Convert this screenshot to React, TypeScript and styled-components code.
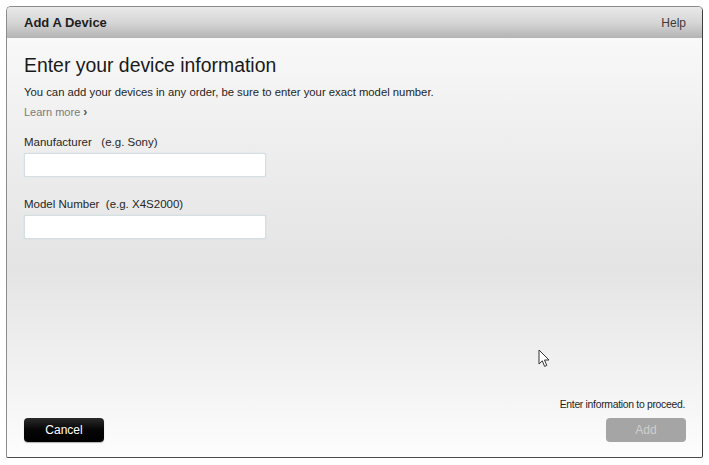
import React from 'react'
import styled, { createGlobalStyle } from 'styled-components'

const GlobalStyle = createGlobalStyle`
  html, body {
    margin: 0;
    padding: 0;
    background: #ffffff;
    font-family: 'Liberation Sans', Arial, sans-serif;
  }
`

function App() {
  return (
    <>
      <GlobalStyle />
      <Page>
        <Dialog>
          <Header>
            <HeaderTitle>Add A Device</HeaderTitle>
            <HelpLink>Help</HelpLink>
          </Header>
          <Body>
            <Title>Enter your device information</Title>
            <Intro>
              You can add your devices in any order, be sure to enter your exact model number.
            </Intro>
            <LearnMore>
              Learn more <Chevron>›</Chevron>
            </LearnMore>
            <Field first>
              <Label>Manufacturer&nbsp;&nbsp; (e.g. Sony)</Label>
              <TextInput />
            </Field>
            <Field>
              <Label>Model Number&nbsp; (e.g. X4S2000)</Label>
              <TextInput />
            </Field>
          </Body>
          <Footer>
            <Button variant="dark">Cancel</Button>
            <FooterRight>
              <Hint>Enter information to proceed.</Hint>
              <Button variant="disabled">Add</Button>
            </FooterRight>
          </Footer>
        </Dialog>
        <Cursor viewBox="0 0 12 19" width="12" height="19">
          <path
            d="M1 1 L1 15 L4.3 11.8 L6.6 17.4 L8.8 16.5 L6.5 11 L11 11 Z"
            fill="#ffffff"
            stroke="#333333"
            strokeWidth="1"
            strokeLinejoin="round"
          />
        </Cursor>
      </Page>
    </>
  )
}

export default App

const Page = styled.div`
  position: relative;
  width: 709px;
  height: 465px;
  padding: 6px 0 0 6px;
  box-sizing: border-box;
`

const Dialog = styled.div`
  display: flex;
  flex-direction: column;
  width: 697px;
  height: 452px;
  box-sizing: border-box;
  border: 1px solid #8c8c8c;
  border-right-color: #3c3c3c;
  border-bottom-color: #4a4a4a;
  border-radius: 5px 5px 2px 2px;
  overflow: hidden;
  background: linear-gradient(
    to bottom,
    #fcfcfc 0%,
    #f0f0f0 25%,
    #e4e4e4 58%,
    #f2f2f2 82%,
    #fdfdfd 100%
  );
`

const Header = styled.div`
  display: flex;
  align-items: center;
  justify-content: space-between;
  height: 31px;
  padding: 0 16px 0 17px;
  background: linear-gradient(to bottom, #e9e9e9 0%, #d6d6d6 50%, #b3b3b3 100%);
  flex-shrink: 0;
`

const HeaderTitle = styled.div`
  font-size: 13px;
  font-weight: bold;
  color: #1e1e1e;
`

const HelpLink = styled.div`
  font-size: 12px;
  color: #3a3a3a;
`

const Body = styled.div`
  display: flex;
  flex-direction: column;
  flex: 1;
  padding: 15px 17px 0;
`

const Title = styled.h1`
  margin: 0;
  font-size: 19.4px;
  line-height: 24px;
  font-weight: normal;
  color: #1a1a1a;
`

const Intro = styled.p`
  margin: 8px 0 0;
  font-size: 11.3px;
  line-height: 14px;
  color: #1e1e1e;
`

const LearnMore = styled.div`
  margin-top: 6px;
  font-size: 11px;
  line-height: 14px;
  color: #7a7a7a;
`

const Chevron = styled.span`
  font-weight: bold;
  font-size: 12px;
  color: #555555;
`

const Field = styled.div<{ first?: boolean }>`
  display: flex;
  flex-direction: column;
  gap: 4px;
  margin-top: ${({ first }) => (first ? '16px' : '20px')};
`

const Label = styled.label`
  font-size: 11.5px;
  line-height: 14px;
  color: #262626;
`

const TextInput = styled.input`
  width: 242px;
  height: 24px;
  box-sizing: border-box;
  border: 1px solid #d4dfe3;
  border-radius: 2px;
  background: #ffffff;
  box-shadow: 0 0 1px rgba(150, 180, 190, 0.6);
  outline: none;
`

const Footer = styled.div`
  display: flex;
  align-items: flex-end;
  justify-content: space-between;
  padding: 0 16px 15px 17px;
`

const FooterRight = styled.div`
  display: flex;
  flex-direction: column;
  align-items: flex-end;
  gap: 7px;
`

const Hint = styled.div`
  font-size: 10.4px;
  letter-spacing: -0.3px;
  line-height: 13px;
  color: #1e1e1e;
  margin-right: 1px;
`

const Button = styled.div<{ variant: 'dark' | 'disabled' }>`
  display: flex;
  align-items: center;
  justify-content: center;
  width: 80px;
  height: 24px;
  box-sizing: border-box;
  border-radius: 4px;
  font-size: 12px;
  background: ${({ variant }) =>
    variant === 'dark'
      ? 'linear-gradient(to bottom, #2a2a2a 0%, #050505 50%, #000000 100%)'
      : '#a5a5a5'};
  color: ${({ variant }) => (variant === 'dark' ? '#ffffff' : '#cfcfcf')};
  box-shadow: ${({ variant }) =>
    variant === 'dark' ? '0 1px 1px rgba(0, 0, 0, 0.3)' : 'none'};
`

const Cursor = styled.svg`
  position: absolute;
  left: 538px;
  top: 349px;
`
